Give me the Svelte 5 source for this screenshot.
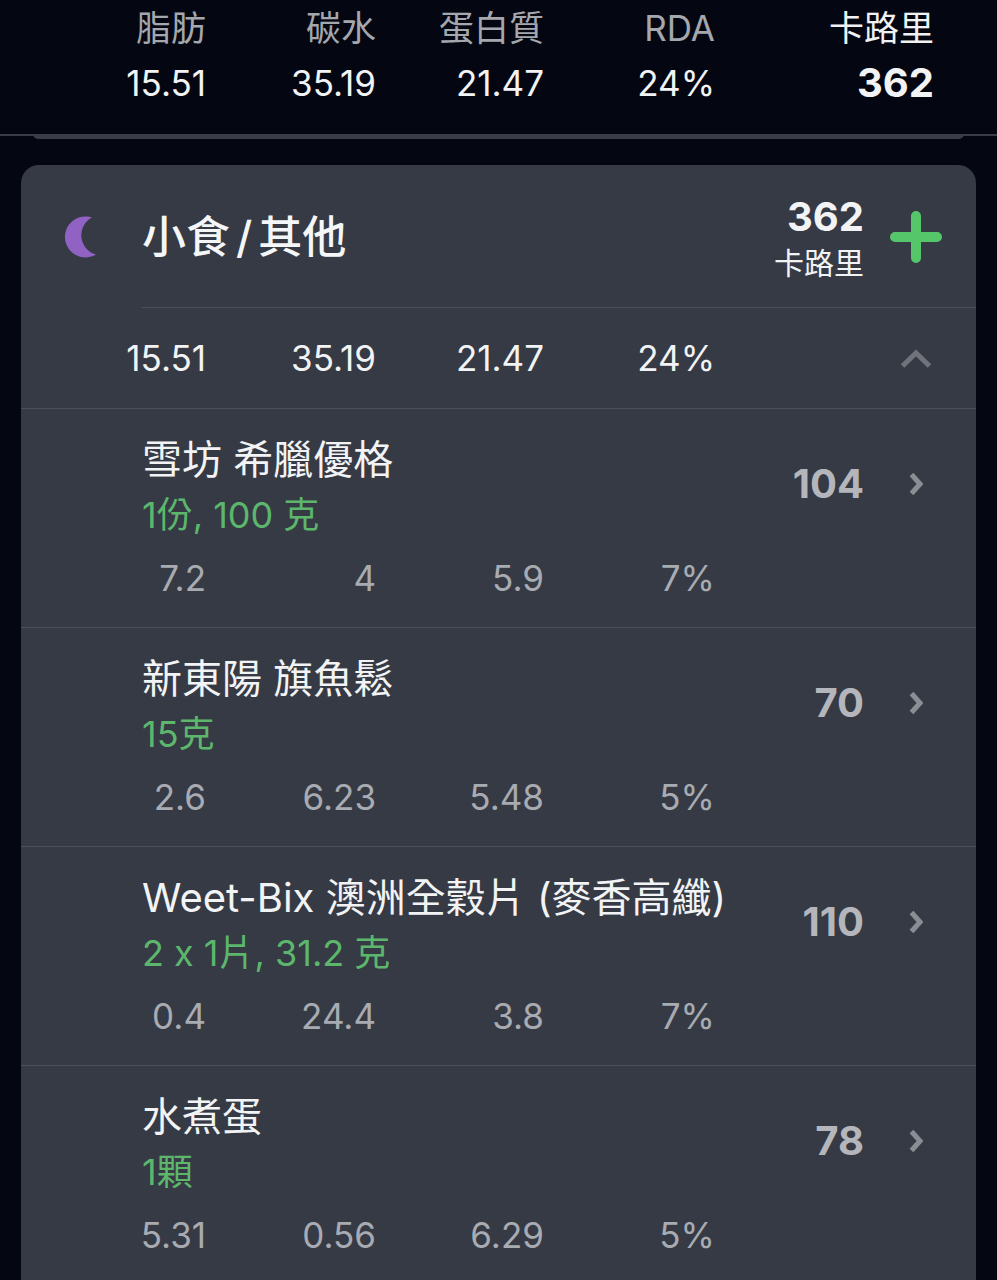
<script>
  const items = [
    { name: '雪坊 希臘優格', serving: '1份, 100 克', cal: 104, m: ['7.2', '4', '5.9', '7%'] },
    { name: '新東陽 旗魚鬆', serving: '15克', cal: 70, m: ['2.6', '6.23', '5.48', '5%'] },
    { name: 'Weet-Bix 澳洲全穀片 (麥香高纖)', serving: '2 x 1片, 31.2 克', cal: 110, m: ['0.4', '24.4', '3.8', '7%'] },
    { name: '水煮蛋', serving: '1顆', cal: 78, m: ['5.31', '0.56', '6.29', '5%'] }
  ];
  const totals = ['15.51', '35.19', '21.47', '24%'];
  const labels = ['脂肪', '碳水', '蛋白質', 'RDA'];
</script>

<div class="page">
  <header class="summary">
    <div class="grid labels">
      {#each labels as l}<span>{l}</span>{/each}
      <span class="cal-label">卡路里</span>
    </div>
    <div class="grid values">
      {#each totals as t}<span>{t}</span>{/each}
      <span class="cal-value">362</span>
    </div>
  </header>
  <div class="rule"><div class="rule-bar"></div></div>

  <section class="card">
    <div class="card-head">
      <svg class="moon" width="36" height="42" viewBox="0 0 36 42" aria-hidden="true">
        <path d="M28 1.500A20.500 20.500 0 1 0 32 38.500 20 20 0 0 1 28 1.500Z" fill="#8f62c4"/>
      </svg>
      <h2>小食<span class="slash">/</span>其他</h2>
      <div class="head-cal">
        <strong>362</strong>
        <span>卡路里</span>
      </div>
      <svg class="plus" width="52" height="52" viewBox="0 0 52 52" aria-hidden="true">
        <path d="M26 5v42M5 26h42" stroke="#55c66a" stroke-width="10" stroke-linecap="round"/>
      </svg>
    </div>
    <div class="totals">
      <div class="grid macro totals-grid">
        {#each totals as t}<span>{t}</span>{/each}
      </div>
      <svg class="up" width="32" height="20" viewBox="0 0 32 20" aria-hidden="true">
        <path d="M2.500 18 16 5l13.500 13" fill="none" stroke="#70737a" stroke-width="5"/>
      </svg>
    </div>

    {#each items as it}
      <div class="item">
        <div class="item-top">
          <div class="item-text">
            <div class="name">{it.name}</div>
            <div class="serving">{it.serving}</div>
          </div>
          <div class="item-cal">{it.cal}</div>
          <svg class="chev" width="14" height="24" viewBox="0 0 14 24" aria-hidden="true">
            <path d="M2.500 2.500 11 12l-8.500 9.500" fill="none" stroke="#8a8d94" stroke-width="5"/>
          </svg>
        </div>
        <div class="grid macro item-macros">
          {#each it.m as v}<span>{v}</span>{/each}
        </div>
      </div>
    {/each}
  </section>
</div>

<style>
  :global(body) {
    margin: 0;
    background: #040711;
  }
  .page {
    width: 997px;
    height: 1280px;
    overflow: hidden;
    background: #040711;
    font-family: Inter, "Noto Sans CJK TC", sans-serif;
    font-feature-settings: "calt" 0;
  }
  .summary {
    height: 134px;
    box-sizing: border-box;
    padding-left: 21px;
    padding-top: 7px;
  }
  .rule {
    height: 2px;
    background: #3a3d45;
  }
  .rule-bar {
    height: 5px;
    margin: 0 33px;
    background: #3a3d45;
    border-radius: 0 0 8px 8px;
  }
  .grid {
    display: grid;
    grid-template-columns: 185px 170px 168px 171px 219px;
    text-align: right;
  }
  .labels {
    color: #a4a7ae;
    font-size: 35px;
    line-height: 42px;
  }
  .cal-label {
    color: #f0f1f3;
  }
  .values {
    margin-top: 13px;
    color: #f2f3f5;
    font-size: 35px;
    line-height: 42px;
  }
  .cal-value {
    font-weight: 700;
    font-size: 40px;
  }
  .card {
    margin: 29px 21px 0;
    background: #363a44;
    border-radius: 18px 18px 0 0;
  }
  .card-head {
    height: 143px;
    display: flex;
    align-items: center;
    padding-left: 43px;
    padding-right: 34px;
  }
  .moon {
    flex: none;
  }
  h2 {
    margin: 0 0 0 42px;
    flex: 1;
    color: #f5f6f8;
    font-size: 44px;
    font-weight: 500;
    line-height: 52px;
  }
  .slash {
    margin: 0 6px;
  }
  .head-cal {
    display: flex;
    flex-direction: column;
    align-items: flex-end;
    color: #f2f3f5;
    margin-right: 26px;
    padding-top: 8px;
  }
  .head-cal strong {
    font-size: 40px;
    line-height: 44px;
    font-weight: 700;
  }
  .head-cal span {
    font-size: 30px;
    line-height: 48px;
  }
  .plus {
    flex: none;
  }
  .totals {
    position: relative;
    height: 100px;
    border-bottom: 1px solid #4d5059;
    display: flex;
    align-items: center;
    justify-content: space-between;
    padding-right: 44px;
  }
  .totals::before {
    content: "";
    position: absolute;
    left: 121px;
    right: 0;
    top: -1px;
    height: 1px;
    background: #4d5059;
  }
  .macro {
    grid-template-columns: 185px 170px 168px 171px;
    font-size: 35px;
    line-height: 42px;
  }
  .totals-grid {
    color: #f2f3f5;
  }
  .item {
    height: 219px;
    box-sizing: border-box;
    border-bottom: 1px solid #4d5059;
    padding-top: 26px;
  }
  .item-top {
    display: flex;
    align-items: center;
    padding-left: 121px;
    padding-right: 53px;
  }
  .item-text {
    flex: 1;
    min-width: 0;
  }
  .name {
    color: #f2f3f5;
    font-size: 40px;
    line-height: 50px;
    white-space: nowrap;
  }
  .serving {
    margin-top: 9px;
    color: #5cb76d;
    font-size: 36px;
    line-height: 42px;
    white-space: nowrap;
  }
  .item-cal {
    color: #b4b6bc;
    font-size: 40px;
    font-weight: 700;
    margin: 0 45px 4px 0;
  }
  .chev {
    flex: none;
    margin-bottom: 4px;
  }
  .item-macros {
    margin-top: 21px;
    color: #a8abb2;
  }
</style>
